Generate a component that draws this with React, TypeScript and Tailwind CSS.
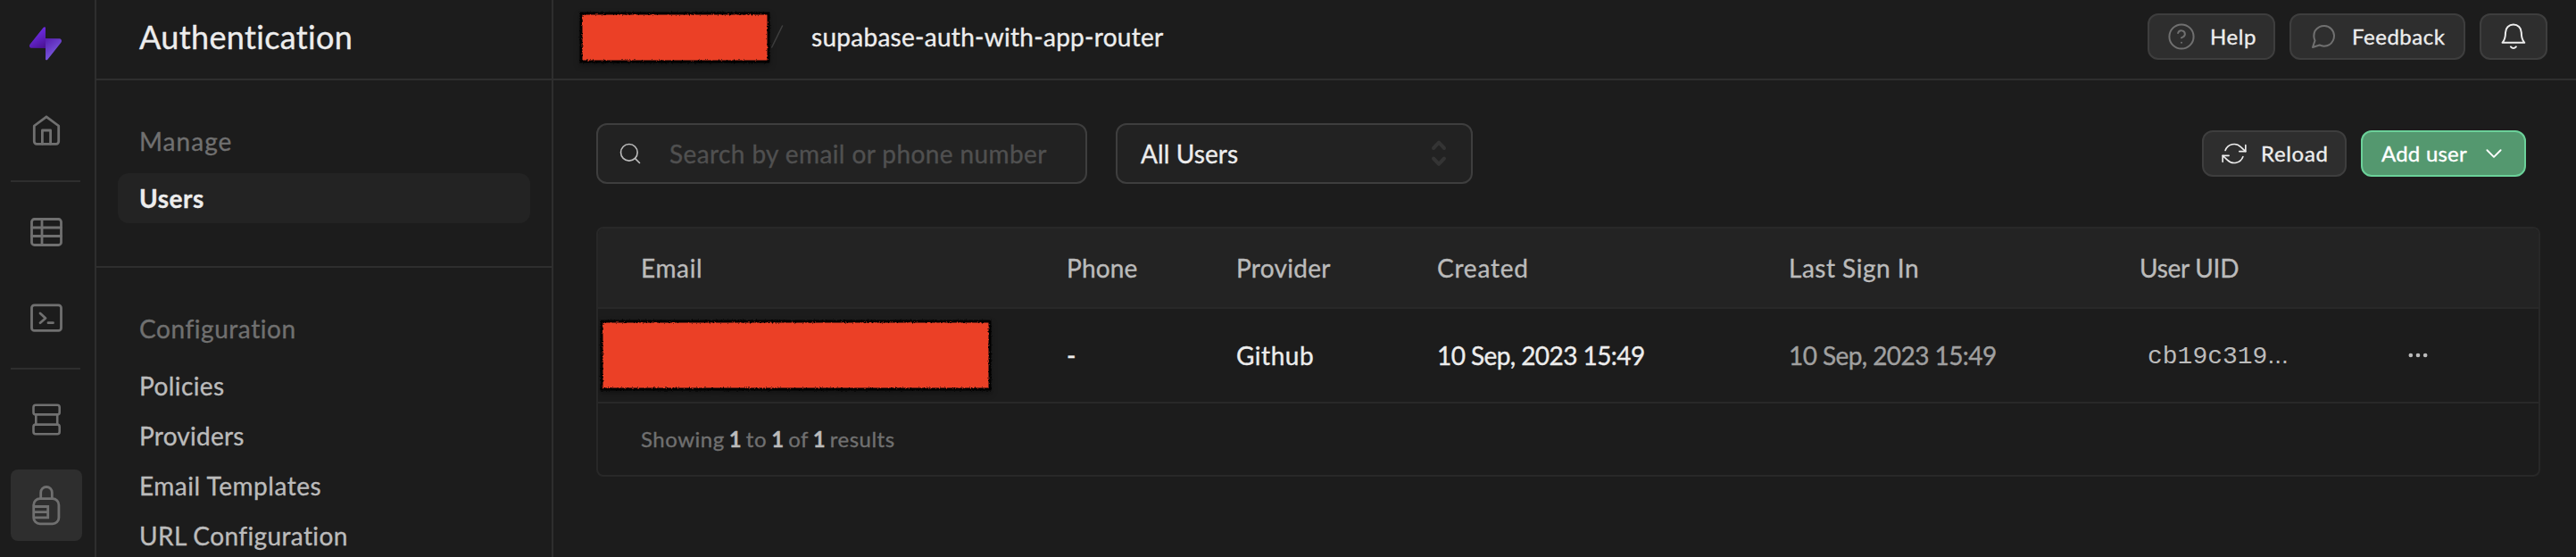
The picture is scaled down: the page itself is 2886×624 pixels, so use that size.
import React from 'react';
import clsx from 'clsx';

type IconProps = { size?: number; className?: string; stroke?: number; viewBox?: string; children: React.ReactNode };

function Icon({ size = 40, className, stroke = 3, viewBox = '0 0 24 24', children }: IconProps) {
  return (
    <svg
      width={size}
      height={size}
      viewBox={viewBox}
      fill="none"
      stroke="currentColor"
      strokeWidth={stroke}
      strokeLinecap="round"
      strokeLinejoin="round"
      className={clsx('shrink-0', className)}
    >
      {children}
    </svg>
  );
}

function Logo() {
  return (
    <svg width="40" height="40" viewBox="32 28 40 40" className="block">
      <defs>
        <linearGradient id="boltLeft" x1="40" y1="38" x2="50" y2="53" gradientUnits="userSpaceOnUse">
          <stop stopColor="#6a2adb" />
          <stop offset="1" stopColor="#4a1192" />
        </linearGradient>
        <linearGradient id="boltRight" x1="52" y1="45" x2="62" y2="58" gradientUnits="userSpaceOnUse">
          <stop stopColor="#5a22b4" />
          <stop offset="1" stopColor="#7450d6" />
        </linearGradient>
      </defs>
      <path d="M51 54V31.4c0-1.4-1.4-1.6-2.3-.6L33.7 49.4c-1.6 2-.4 4.4 1.8 4.4z" fill="url(#boltLeft)" />
      <path d="M51 43v23.2c0 1.3 1.5 1.5 2.3.5l15-18.9c1.6-2 .4-4.6-1.9-4.6z" fill="url(#boltRight)" />
    </svg>
  );
}

function RailButton({ active, children }: { active?: boolean; children: React.ReactNode }) {
  return (
    <div className={clsx('flex h-20 w-20 shrink-0 items-center justify-center rounded-lg text-[#707070]', active && 'bg-[#2e2e2e]')}>
      {children}
    </div>
  );
}

function RailDivider() {
  return <div className="h-0.5 w-[78px] shrink-0 bg-[#2e2e2e]" />;
}

function Rail() {
  return (
    <nav className="flex w-[108px] shrink-0 flex-col gap-4 border-r-2 border-[#2e2e2e] pl-3">
      <div className="flex h-[90px] w-20 shrink-0 justify-center pt-7">
        <Logo />
      </div>
      <RailButton>
        <Icon viewBox="32 126 40 40" stroke={2.8}>
          <path d="M52 130.8l13.7 10.2v17.6a2.8 2.8 0 0 1-2.8 2.8H41.1a2.8 2.8 0 0 1-2.8-2.8V141z" />
          <path d="M47.4 161v-15h9.2v15" />
        </Icon>
      </RailButton>
      <RailDivider />
      <RailButton>
        <Icon viewBox="32 240 40 40" stroke={2.8}>
          <rect x="35.5" y="245.5" width="33" height="29" rx="3" />
          <path d="M47 245.5v29M35.5 255h33M35.5 264.5h33" />
        </Icon>
      </RailButton>
      <RailButton>
        <Icon viewBox="32 336 40 40" stroke={2.8}>
          <rect x="35.5" y="341.8" width="33" height="28.6" rx="3" />
          <path d="M45 351l6 5.5-6 5.2M54 361.7h5.5" />
        </Icon>
      </RailButton>
      <RailDivider />
      <RailButton>
        <Icon viewBox="32 450 40 40" stroke={2.6}>
          <rect x="37.5" y="453.7" width="29.2" height="10.7" rx="2.5" />
          <rect x="37.5" y="475.6" width="29.2" height="10.7" rx="2.5" />
          <path d="M40.3 464.5v11M64.2 464.5v11" />
        </Icon>
      </RailButton>
      <RailButton active>
        <Icon size={48} viewBox="28 542 48 48" stroke={2.8}>
          <rect x="37.7" y="558.7" width="28.2" height="28.2" rx="7" />
          <path d="M45.7 558v-6.2a6.3 6.3 0 0 1 12.6 0v6.2" />
          <path d="M38.5 567.5h15.2v12.4H39M39 573.7h14" strokeLinecap="butt" strokeLinejoin="miter" />
        </Icon>
      </RailButton>
    </nav>
  );
}

function SectionTitle({ children, className }: { children: string; className: string }) {
  return <h2 className={clsx('px-6 text-[28px] leading-9 text-[#707070]', className)}>{children}</h2>;
}

function MenuItem({ children, className }: { children: string; className: string }) {
  return <a className={clsx('flex h-14 items-center px-6 text-[28px] leading-9', className)}>{children}</a>;
}

function Sidebar() {
  return (
    <aside className="w-[512px] shrink-0 border-r-2 border-[#2e2e2e]">
      <div className="flex h-[90px] items-center border-b-2 border-[#2e2e2e] pb-1.5 pl-12">
        <h1 className="text-[36px] leading-10 tracking-[0.35px] text-[#ededed]">Authentication</h1>
      </div>
      <div className="h-[210px] border-b-2 border-[#2e2e2e] px-6 pt-[50px]">
        <SectionTitle className="tracking-[1.03px]">Manage</SectionTitle>
        <MenuItem className="mt-[18px] rounded-xl bg-[#232323] font-bold tracking-[0.54px] text-[#ededed]">Users</MenuItem>
      </div>
      <div className="px-6 pt-[50px] text-[#bbbbbb]">
        <SectionTitle className="mb-[18px] tracking-[0.56px]">Configuration</SectionTitle>
        <MenuItem className="tracking-[0.41px]">Policies</MenuItem>
        <MenuItem className="tracking-[0.24px]">Providers</MenuItem>
        <MenuItem className="tracking-[0.53px]">Email Templates</MenuItem>
        <MenuItem className="tracking-[0.38px]">URL Configuration</MenuItem>
      </div>
    </aside>
  );
}

function Redaction({ width, height, className }: { width: number; height: number; className?: string }) {
  const id = `rough-${width}`;
  return (
    <svg
      width={width}
      height={height}
      viewBox={`0 0 ${width} ${height}`}
      className={clsx('shrink-0 overflow-visible drop-shadow-[0_3px_3px_rgba(0,0,0,0.35)]', className)}
    >
      <filter id={id} x="-5%" y="-10%" width="110%" height="120%">
        <feTurbulence type="fractalNoise" baseFrequency="0.6" numOctaves="2" seed="4" />
        <feDisplacementMap in="SourceGraphic" scale="3" xChannelSelector="R" yChannelSelector="G" />
      </filter>
      <rect x="0.5" y="0.5" width={width - 1} height={height - 1} fill="#000" filter={`url(#${id})`} />
      <rect x="3.5" y="3.5" width={width - 7} height={height - 7} fill="#eb4128" filter={`url(#${id})`} />
    </svg>
  );
}

function Button({ className, children }: { className?: string; children: React.ReactNode }) {
  return (
    <button
      className={clsx(
        'flex h-[52px] shrink-0 items-center gap-4 rounded-xl border-2 text-[24px] leading-8 whitespace-nowrap',
        className,
      )}
    >
      {children}
    </button>
  );
}

const NEUTRAL = 'border-[#3e3e3e] bg-[#2e2e2e] pl-5 text-[#ededed]';

function TopBar() {
  return (
    <header className="flex h-[90px] items-center border-b-2 border-[#2e2e2e] pr-8 pb-1.5 pl-[29px]">
      <Redaction width={214} height={58} className="mt-0.5" />
      <svg width="16" height="26" viewBox="0 0 16 26" stroke="#3e3e3e" strokeWidth="1.6" strokeLinecap="round">
        <path d="M1.7 25L13.5 1" />
      </svg>
      <span className="ml-[30px] text-[28px] leading-9 tracking-[0.28px] text-[#ededed]">supabase-auth-with-app-router</span>
      <div className="ml-auto flex gap-4">
        <Button className={clsx(NEUTRAL, 'w-[143px] tracking-[0.57px]')}>
          <Icon size={32} stroke={1.5} className="text-[#707070]">
            <circle cx="12" cy="12" r="10.2" />
            <path d="M9.090 9a3 3 0 0 1 5.830 1c0 2-3 3-3 3M12 17h.01" />
          </Icon>
          Help
        </Button>
        <Button className={clsx(NEUTRAL, 'w-[197px] tracking-[0.51px]')}>
          <Icon size={32} stroke={1.5} className="text-[#707070]">
            <path d="M21 11.5a8.38 8.38 0 0 1-.9 3.8 8.5 8.5 0 0 1-7.6 4.7 8.38 8.38 0 0 1-3.8-.9L3 21l1.9-5.7a8.38 8.38 0 0 1-.9-3.8 8.5 8.5 0 0 1 4.7-7.6 8.38 8.38 0 0 1 3.8-.9h.5a8.48 8.48 0 0 1 8 8v.5z" />
          </Icon>
          Feedback
        </Button>
        <Button className={clsx(NEUTRAL, 'w-[76px]')}>
          <Icon size={32} viewBox="-2 -1 32 32" stroke={2}>
            <path d="M1.5 21.8C4.5 18.5 5 15 5 10.5 5 5 9 1.5 13.9 1.5S22.8 5 22.8 10.5c0 4.5.5 8 3.5 11.3z" />
            <path d="M10.9 26.4q3 3.4 6 0" />
          </Icon>
        </Button>
      </div>
    </header>
  );
}

function Toolbar() {
  return (
    <div className="flex items-center pr-2">
      <div className="flex h-[68px] w-[550px] items-center rounded-xl border-2 border-[#3e3e3e] bg-[#222222] pl-[22px]">
        <Icon size={28} stroke={1.4} className="text-[#bbbbbb]">
          <circle cx="11" cy="11" r="8" />
          <path d="M21 21l-4.350-4.350" />
        </Icon>
        <span className="ml-[30px] text-[28px] leading-9 tracking-[0.4px] text-[#505050]">Search by email or phone number</span>
      </div>
      <div className="ml-8 flex h-[68px] w-[400px] items-center justify-between rounded-xl border-2 border-[#3e3e3e] bg-[#222222] px-[26px]">
        <span className="text-[28px] leading-9 tracking-[0.1px] text-[#ededed]">All Users</span>
        <svg width="20" height="32" viewBox="0 0 20 32" fill="none" stroke="#343434" strokeWidth="4" strokeLinecap="round" strokeLinejoin="round">
          <path d="M4 10l6-6.300 6 6.300M4 21.500l6 6.300 6-6.300" />
        </svg>
      </div>
      <div className="ml-auto flex gap-4">
        <Button className={clsx(NEUTRAL, 'w-[162px] tracking-[0.67px]')}>
          <Icon size={28} stroke={1.4}>
            <path d="M23 4v6h-6M1 20v-6h6" />
            <path d="M3.510 9a9 9 0 0 1 14.850-3.360L23 10M1 14l4.640 4.360A9 9 0 0 0 20.490 15" />
          </Icon>
          Reload
        </Button>
        <Button className="w-[185px] border-[#6bd199] bg-[#54986f] pl-[21px] tracking-[0.22px] text-white">
          Add user
          <Icon size={28} stroke={1.6}>
            <path d="M5.5 8.800l6.500 6.500 6.500-6.500" />
          </Icon>
        </Button>
      </div>
    </div>
  );
}

const COLUMNS = 'grid grid-cols-[477px_190px_225px_394px_393px_298px_1fr] items-center pl-12';

function UsersTable() {
  return (
    <div className="mt-12 overflow-hidden rounded-lg border-2 border-[#282828] text-[28px] leading-9">
      <div className={clsx(COLUMNS, 'h-[90px] border-b-2 border-[#282828] bg-[#232323] text-[#bbbbbb]')}>
        <span className="tracking-[0.64px]">Email</span>
        <span className="tracking-[0.16px]">Phone</span>
        <span className="tracking-[0.29px]">Provider</span>
        <span className="tracking-[0.8px]">Created</span>
        <span className="tracking-[0.5px]">Last Sign In</span>
        <span className="tracking-[-0.27px]">User UID</span>
      </div>
      <div className={clsx(COLUMNS, 'h-[106px] border-b-2 border-[#282828] text-[#ededed]')}>
        <Redaction width={439} height={80} className="-ml-[46px]" />
        <span>-</span>
        <span className="tracking-[0.53px]">Github</span>
        <span className="tracking-[-0.57px]">10 Sep, 2023 15:49</span>
        <span className="tracking-[-0.57px] text-[#a0a0a0]">10 Sep, 2023 15:49</span>
        <span className="pt-0.5 pl-[9px] font-['Liberation_Mono',monospace] text-[#bbbbbb] [-webkit-text-stroke:0px]">
          cb19c319<span className="font-['Liberation_Sans',sans-serif]">...</span>
        </span>
        <Icon size={28} stroke={2} className="text-[#bbbbbb]">
          <circle cx="5" cy="12" r="1" />
          <circle cx="12" cy="12" r="1" />
          <circle cx="19" cy="12" r="1" />
        </Icon>
      </div>
      <p className="flex h-20 items-center pl-12 text-[24px] leading-8 tracking-[0.5px] text-[#707070]">
        <span className="whitespace-pre [word-spacing:-1.5px]">
          Showing <b className="tracking-normal text-[#bbbbbb]">1</b> to <b className="tracking-normal text-[#bbbbbb]">1</b> of{' '}
          <b className="tracking-normal text-[#bbbbbb]">1</b> results
        </span>
      </p>
    </div>
  );
}

export default function App() {
  return (
    <div className="flex h-[624px] w-[2886px] overflow-hidden bg-[#1c1c1c] font-['Lato','Liberation_Sans',sans-serif] [-webkit-text-stroke:0.35px]">
      <Rail />
      <Sidebar />
      <main className="flex flex-1 flex-col">
        <TopBar />
        <div className="px-12 pt-12">
          <Toolbar />
        </div>
        <div className="pr-10 pl-12">
          <UsersTable />
        </div>
      </main>
    </div>
  );
}
